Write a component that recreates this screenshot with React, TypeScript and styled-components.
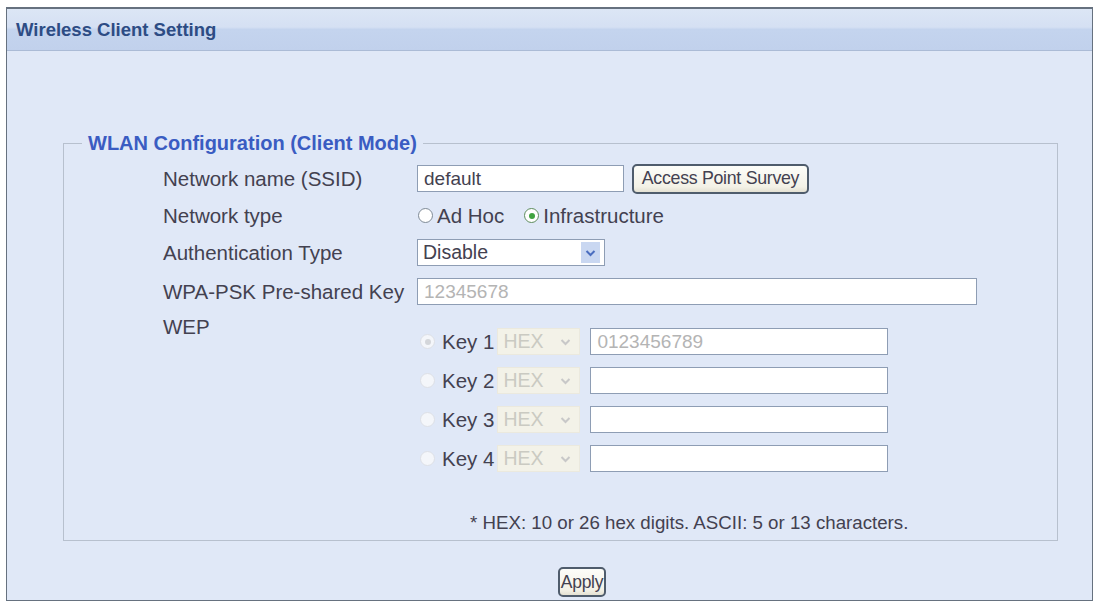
import React from 'react';
import styled, {createGlobalStyle} from 'styled-components';

const GlobalStyle = createGlobalStyle`
	html, body {
		margin: 0;
		padding: 0;
		background: #ffffff;
	}
	body {
		font-family: "Liberation Sans", Arial, sans-serif;
	}
`;

const Page = styled.div`
	box-sizing: border-box;
	height: 604px;
	padding: 7px 2px 3px 6px;
`;

const Panel = styled.div`
	box-sizing: border-box;
	height: 100%;
	display: flex;
	flex-direction: column;
	background: #e0e8f7;
	border: 1px solid #66717f;
	border-top: 2px solid #66717f;
`;

const Header = styled.div`
	height: 41px;
	display: flex;
	align-items: center;
	padding-left: 9px;
	background: linear-gradient(to bottom, #dce6f5 0%, #d5e0f3 44%, #c4d4ee 50%, #c1d1ec 100%);
	border-bottom: 1px solid #abbbd6;
	font: bold 18.5px "Liberation Sans", Arial, sans-serif;
	color: #2d4c84;
`;

const Body = styled.div`
	padding: 80px 34px 0 56px;
`;

const Fieldset = styled.fieldset`
	margin: 0;
	min-width: 0;
	padding: 5px 0 4px 18px;
	border: 1px solid #b7c0ce;
`;

const Legend = styled.legend`
	padding: 0 6px;
	font: bold 20px/24px "Liberation Sans", Arial, sans-serif;
	color: #3a5cc2;
`;

const Form = styled.div`
	display: flex;
	flex-direction: column;
	margin-left: 81px;
	color: #434150;
	font-size: 20.5px;
`;

const Row = styled.div<{ $h: number; $top?: boolean }>`
	display: grid;
	grid-template-columns: 254px 1fr;
	align-items: ${p => (p.$top ? 'start' : 'center')};
	height: ${p => p.$h}px;
`;

const Label = styled.div<{ $pad?: number }>`
	line-height: 26px;
	padding-top: ${p => p.$pad || 0}px;
	white-space: nowrap;
`;

const Field = styled.div`
	display: flex;
	align-items: center;
	gap: 8px;
`;

const TextBox = styled.div<{ $w: number; $muted?: boolean }>`
	box-sizing: border-box;
	width: ${p => p.$w}px;
	height: 27px;
	padding-left: 6px;
	display: flex;
	align-items: center;
	background: #ffffff;
	border: 1px solid #8e9db4;
	font-size: 19px;
	color: ${p => (p.$muted ? '#b4b4b4' : '#434150')};
`;

const Button = styled.div<{ $w: number; $size: number }>`
	box-sizing: border-box;
	width: ${p => p.$w}px;
	height: 30px;
	display: flex;
	align-items: center;
	justify-content: center;
	overflow: hidden;
	white-space: nowrap;
	border: 2px solid #4f5c6c;
	border-radius: 5px;
	background: linear-gradient(to bottom, #fdfdf9 0%, #f3f1e6 80%, #e4e1d3 100%);
	font-size: ${p => p.$size}px;
	letter-spacing: -0.3px;
	color: #434150;
`;

const RadioGroup = styled.div`
	display: flex;
	align-items: center;
	padding-left: 1px;
`;

const Radio = styled.span<{ $on?: boolean; $off?: boolean }>`
	box-sizing: border-box;
	width: 15px;
	height: 15px;
	flex: none;
	border-radius: 50%;
	display: flex;
	align-items: center;
	justify-content: center;
	background: ${p => (p.$off ? '#f4f6fa' : '#ffffff')};
	border: 1px solid ${p => (p.$off ? '#dde0e6' : p.$on ? '#5d8c5d' : '#7e8a96')};
	&::after {
		content: '';
		width: 6px;
		height: 6px;
		border-radius: 50%;
		background: ${p => (p.$off ? '#d4d6da' : '#3fa33f')};
		display: ${p => (p.$on ? 'block' : 'none')};
	}
`;

const RadioText = styled.span`
	margin-left: 4px;
	margin-right: 20px;
	font-size: 20.5px;
`;

const Select = styled.div<{ $w: number; $disabled?: boolean }>`
	box-sizing: border-box;
	width: ${p => p.$w}px;
	height: 27px;
	display: flex;
	align-items: center;
	background: ${p => (p.$disabled ? '#f3f2e8' : '#ffffff')};
	border: 1px solid ${p => (p.$disabled ? '#ebe9de' : '#8e9db4')};
	font-size: 19.5px;
	color: ${p => (p.$disabled ? '#cacac2' : '#434150')};
`;

const SelectText = styled.span`
	flex: 1;
	padding-left: 5px;
`;

const Arrow = styled.span<{ $disabled?: boolean }>`
	width: 19px;
	height: 21px;
	margin-right: 4px;
	display: flex;
	align-items: center;
	justify-content: center;
	background: ${p => (p.$disabled ? '#f3f2e8' : '#c9d7f1')};
`;

const KeyList = styled.div`
	display: flex;
	flex-direction: column;
	padding-top: 10px;
`;

const KeyRow = styled.div`
	height: 39px;
	display: flex;
	align-items: center;
	padding-left: 3px;
`;

const KeyName = styled.span`
	margin: 0 3px 0 7px;
	font-size: 20.5px;
`;

const KeyInput = styled(TextBox)`
	margin-left: 10px;
`;

const Note = styled.div`
	margin-top: 32px;
	padding-left: 307px;
	line-height: 26px;
	font-size: 18.7px;
	white-space: nowrap;
`;

const Footer = styled.div`
	display: flex;
	justify-content: center;
	padding: 26px 0 0 43px;
`;

const Chevron = ({color}: { color: string }) => (
	<svg width="11" height="8" viewBox="0 0 11 8">
		<path d="M1.5 2 L5.5 6 L9.5 2" fill="none" stroke={color} strokeWidth="2"/>
	</svg>
);

const keys = ['Key 1', 'Key 2', 'Key 3', 'Key 4'];

export default function App() {
	return (
		<>
			<GlobalStyle/>
			<Page>
				<Panel>
					<Header>Wireless Client Setting</Header>
					<Body>
						<Fieldset>
							<Legend>WLAN Configuration (Client Mode)</Legend>
							<Form>
								<Row $h={37}>
									<Label>Network name (SSID)</Label>
									<Field>
										<TextBox $w={207}>default</TextBox>
										<Button $w={177} $size={17.8}>Access Point Survey</Button>
									</Field>
								</Row>
								<Row $h={37}>
									<Label>Network type</Label>
									<RadioGroup>
										<Radio/>
										<RadioText>Ad Hoc</RadioText>
										<Radio $on/>
										<RadioText>Infrastructure</RadioText>
									</RadioGroup>
								</Row>
								<Row $h={37}>
									<Label>Authentication Type</Label>
									<Field>
										<Select $w={188}>
											<SelectText>Disable</SelectText>
											<Arrow><Chevron color="#4a6dbf"/></Arrow>
										</Select>
									</Field>
								</Row>
								<Row $h={41}>
									<Label>WPA-PSK Pre-shared Key</Label>
									<Field>
										<TextBox $w={560} $muted>12345678</TextBox>
									</Field>
								</Row>
								<Row $h={166} $top>
									<Label $pad={2}>WEP</Label>
									<KeyList>
										{keys.map((k, i) => (
											<KeyRow key={k}>
												<Radio $on={i === 0} $off/>
												<KeyName>{k}</KeyName>
												<Select $w={83} $disabled>
													<SelectText>HEX</SelectText>
													<Arrow $disabled><Chevron color="#c8c8c8"/></Arrow>
												</Select>
												<KeyInput $w={298} $muted>{i === 0 ? '0123456789' : ''}</KeyInput>
											</KeyRow>
										))}
									</KeyList>
								</Row>
								<Note>* HEX: 10 or 26 hex digits. ASCII: 5 or 13 characters.</Note>
							</Form>
						</Fieldset>
						<Footer>
							<Button $w={48} $size={17.5}>Apply</Button>
						</Footer>
					</Body>
				</Panel>
			</Page>
		</>
	);
}
